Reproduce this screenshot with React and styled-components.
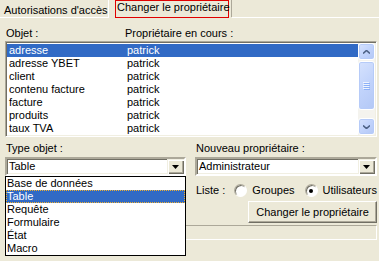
import React from 'react';
import styled, { createGlobalStyle } from 'styled-components';

const GlobalStyle = createGlobalStyle`
  html, body { margin: 0; padding: 0; background: #ece9d8; }
  body {
    font-family: "Liberation Sans", Arial, sans-serif;
    font-size: 11px;
    color: #000;
  }
`;

const Window = styled.div`
  width: 379px;
  height: 261px;
  overflow: hidden;
  background: #ece9d8;
  display: flex;
  flex-direction: column;
  line-height: 13px;
`;

const TabStrip = styled.div`
  display: flex;
  height: 18px;
  flex-shrink: 0;
`;

const Tab = styled.div`
  box-sizing: border-box;
  width: 109px;
  height: 18px;
  padding: 4px 0 0 4px;
  border-right: 1px solid #fff;
  border-bottom: 1px solid #fff;
  white-space: nowrap;
`;

const ActiveTab = styled.div`
  margin-left: 6px;
  padding-right: 2px;
  height: 17px;
  border-right: 1px solid #aca899;
`;

const FocusBox = styled.div`
  box-sizing: border-box;
  width: 114px;
  height: 18px;
  padding-left: 1px;
  border: 1px solid #e00000;
  white-space: nowrap;
`;

const TabFill = styled.div`
  flex: 1;
  box-sizing: border-box;
  height: 18px;
  border-bottom: 1px solid #fff;
`;

const Panel = styled.div`
  padding: 0 2px 0 5px;
`;

const Columns = styled.div`
  display: grid;
  grid-template-columns: 119px 1fr;
  height: 13px;
  margin-top: 9px;
  padding-left: 1px;
`;

const sunken = `
  border: 2px solid;
  border-color: #aca899 #fff #fff #aca899;
  box-shadow: inset 1px 1px 0 #716f64, inset -1px -1px 0 #f1efe2;
`;

const ListBox = styled.div`
  box-sizing: border-box;
  height: 96px;
  margin-top: 1px;
  ${sunken}
  border-width: 1px;
  padding: 1px;
  background: #fff;
  display: flex;
`;

const Rows = styled.div`
  flex: 1;
  padding-top: 1px;
`;

const Row = styled.div`
  display: grid;
  grid-template-columns: 118px 1fr;
  height: 13px;
  padding-left: 2px;
  white-space: nowrap;
  background: ${p => (p.$selected ? '#316ac5' : 'transparent')};
  color: ${p => (p.$selected ? '#fff' : '#000')};
`;

const ScrollBar = styled.div`
  width: 17px;
  display: flex;
  flex-direction: column;
  background: #f4f3ee;
`;

const ScrollButton = styled.div`
  box-sizing: border-box;
  width: 17px;
  height: 17px;
  border: 1px solid #fff;
  border-radius: 3px;
  background: linear-gradient(135deg, #d6e2fd 0%, #c1d3fb 50%, #b3c8f6 100%);
  box-shadow: inset 0 0 0 1px #b6cbf8;
  display: flex;
  align-items: center;
  justify-content: center;
`;

const Thumb = styled(ScrollButton)`
  height: 49px;
  margin-top: 1px;
`;

const Track = styled.div`
  flex: 1;
`;

const BottomGrid = styled.div`
  display: grid;
  grid-template-columns: 181px 1fr;
  column-gap: 9px;
  margin-top: 5px;
`;

const Column = styled.div`
  position: relative;
  display: flex;
  flex-direction: column;
`;

const Label = styled.div`
  height: 13px;
  padding-left: 1px;
  white-space: nowrap;
`;

const Combo = styled.div`
  box-sizing: border-box;
  height: 19px;
  margin-top: 2px;
  ${sunken}
  background: #fff;
  display: flex;
  align-items: center;
  padding-left: 2px;
`;

const ComboText = styled.div`
  flex: 1;
  white-space: nowrap;
`;

const DropButton = styled.div`
  box-sizing: border-box;
  width: 17px;
  height: 15px;
  background: #ece9d8;
  box-shadow: inset 1px 1px 0 #f1efe2, inset 2px 2px 0 #fff, inset -1px -1px 0 #716f64, inset -2px -2px 0 #aca899;
  display: flex;
  align-items: center;
  justify-content: center;
`;

const DropList = styled.div`
  position: absolute;
  top: 34px;
  left: 0;
  width: 181px;
  box-sizing: border-box;
  border: 1px solid #000;
  background: #fff;
  z-index: 2;
`;

const DropItem = styled.div`
  height: 13px;
  padding-left: 1px;
  box-sizing: border-box;
  white-space: nowrap;
  background: ${p => (p.$selected ? '#316ac5' : 'transparent')};
  color: ${p => (p.$selected ? '#fff' : '#000')};
  outline: ${p => (p.$selected ? '1px dotted #f0b030' : 'none')};
  outline-offset: -1px;
`;

const RadioRow = styled.div`
  display: flex;
  align-items: center;
  height: 13px;
  margin-top: 8px;
  padding-left: 1px;
`;

const RadioLabel = styled.label`
  display: flex;
  align-items: center;
  gap: 5px;
  margin-left: ${p => p.$gap}px;
  white-space: nowrap;
`;

const RadioCircle = styled.span`
  box-sizing: border-box;
  width: 13px;
  height: 13px;
  border-radius: 50%;
  border: 1px solid;
  border-color: #aca899 #fff #fff #aca899;
  box-shadow: inset 1px 1px 0 #716f64;
  background: #fff;
  display: flex;
  align-items: center;
  justify-content: center;
  &::after {
    content: '';
    width: 4px;
    height: 4px;
    border-radius: 50%;
    background: ${p => (p.$checked ? '#000' : 'transparent')};
  }
`;

const Button = styled.button`
  align-self: flex-end;
  box-sizing: border-box;
  width: 129px;
  height: 22px;
  margin-top: 4px;
  padding: 0;
  font: inherit;
  color: #000;
  background: #ece9d8;
  border: 1px solid;
  border-color: #fff #716f64 #716f64 #fff;
  box-shadow: inset -1px -1px 0 #aca899;
`;

const Progress = styled.div`
  box-sizing: border-box;
  height: 15px;
  margin-top: 2px;
  border: 1px solid;
  border-color: #aca899 #fff #fff #aca899;
`;

const Up = () => (
  <svg width="7" height="4" viewBox="0 0 7 4">
    <path d="M0 3.5 L3.5 0.5 L7 3.5" fill="none" stroke="#4d6185" strokeWidth="1.6" />
  </svg>
);

const Down = () => (
  <svg width="7" height="4" viewBox="0 0 7 4">
    <path d="M0 0.5 L3.5 3.5 L7 0.5" fill="none" stroke="#4d6185" strokeWidth="1.6" />
  </svg>
);

const Grip = () => (
  <svg width="7" height="8" viewBox="0 0 7 8">
    {[0, 2, 4, 6].map(y => (
      <g key={y}>
        <rect x="0" y={y} width="6" height="1" fill="#eef4fe" />
        <rect x="1" y={y + 1} width="6" height="1" fill="#8cb0f8" />
      </g>
    ))}
  </svg>
);

const Arrow = () => (
  <svg width="7" height="4" viewBox="0 0 7 4">
    <path d="M0 0 H7 L3.5 4 Z" fill="#000" />
  </svg>
);

const objects = [
  'adresse',
  'adresse YBET',
  'client',
  'contenu facture',
  'facture',
  'produits',
  'taux TVA',
];

const types = ['Base de données', 'Table', 'Requête', 'Formulaire', 'État', 'Macro'];

export default function App() {
  return (
    <Window>
      <GlobalStyle />
      <TabStrip>
        <Tab>Autorisations d'accès</Tab>
        <ActiveTab>
          <FocusBox>Changer le propriétaire</FocusBox>
        </ActiveTab>
        <TabFill />
      </TabStrip>

      <Panel>
        <Columns>
          <span>Objet :</span>
          <span>Propriétaire en cours :</span>
        </Columns>
        <ListBox>
          <Rows>
            {objects.map((name, i) => (
              <Row key={name} $selected={i === 0}>
                <span>{name}</span>
                <span>patrick</span>
              </Row>
            ))}
          </Rows>
          <ScrollBar>
            <ScrollButton><Up /></ScrollButton>
            <Thumb><Grip /></Thumb>
            <Track />
            <ScrollButton><Down /></ScrollButton>
          </ScrollBar>
        </ListBox>

        <BottomGrid>
          <Column>
            <Label>Type objet :</Label>
            <Combo>
              <ComboText>Table</ComboText>
              <DropButton><Arrow /></DropButton>
            </Combo>
            <DropList>
              {types.map(t => (
                <DropItem key={t} $selected={t === 'Table'}>{t}</DropItem>
              ))}
            </DropList>
          </Column>
          <Column>
            <Label>Nouveau propriétaire :</Label>
            <Combo>
              <ComboText>Administrateur</ComboText>
              <DropButton><Arrow /></DropButton>
            </Combo>
            <RadioRow>
              <span>Liste :</span>
              <RadioLabel $gap={9}><RadioCircle />Groupes</RadioLabel>
              <RadioLabel $gap={10}><RadioCircle $checked />Utilisateurs</RadioLabel>
            </RadioRow>
            <Button>Changer le propriétaire</Button>
          </Column>
        </BottomGrid>
        <Progress />
      </Panel>
    </Window>
  );
}
